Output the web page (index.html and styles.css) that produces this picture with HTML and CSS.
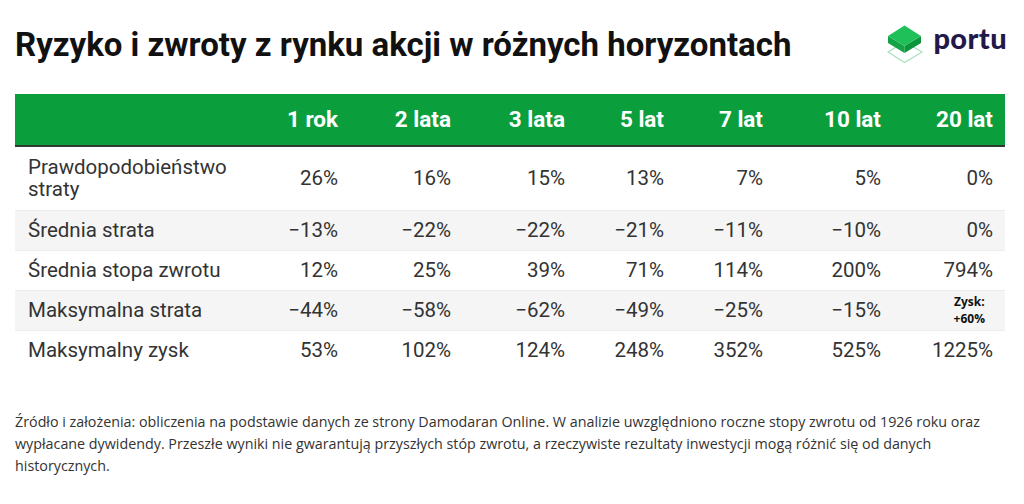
FILE: index.html
```html
<!DOCTYPE html>
<html lang="pl">
<head>
<meta charset="utf-8">
<link rel="stylesheet" href="styles.css">
</head>
<body>
<div class="page">
  <header class="top">
    <h1 class="title">Ryzyko i zwroty z rynku akcji w różnych horyzontach</h1>
    <div class="logo">
      <svg class="cube" width="37" height="40" viewBox="0 0 37 40">
        <path d="M1 28 L17.5 18 L35 28 L17.5 38.5 Z" fill="none" stroke="#a6e0bb" stroke-width="1.2"/>
        <path d="M1 12 L17.5 22 L17.5 29 L1 19 Z" fill="#12a445"/>
        <path d="M17.5 22 L34 12 L34 19 L17.5 29 Z" fill="#0b963c"/>
        <path d="M1 12 L17.5 1.5 L34 12 L17.5 22 Z" fill="#1fc05a"/>
      </svg>
      <span class="brand">portu</span>
    </div>
  </header>

  <table class="grid">
    <colgroup>
      <col class="c-label"><col class="c1"><col class="c2"><col class="c3"><col class="c4"><col class="c5"><col class="c6"><col class="c7">
    </colgroup>
    <thead>
      <tr>
        <th></th><th>1 rok</th><th>2 lata</th><th>3 lata</th><th>5 lat</th><th>7 lat</th><th>10 lat</th><th>20 lat</th>
      </tr>
    </thead>
    <tbody>
      <tr class="tall">
        <td class="label">Prawdopodobieństwo<br>straty</td><td>26%</td><td>16%</td><td>15%</td><td>13%</td><td>7%</td><td>5%</td><td>0%</td>
      </tr>
      <tr class="alt">
        <td class="label">Średnia strata</td><td>−13%</td><td>−22%</td><td>−22%</td><td>−21%</td><td>−11%</td><td>−10%</td><td>0%</td>
      </tr>
      <tr>
        <td class="label">Średnia stopa zwrotu</td><td>12%</td><td>25%</td><td>39%</td><td>71%</td><td>114%</td><td>200%</td><td>794%</td>
      </tr>
      <tr class="alt">
        <td class="label">Maksymalna strata</td><td>−44%</td><td>−58%</td><td>−62%</td><td>−49%</td><td>−25%</td><td>−15%</td><td class="small"><span>Zysk:<br>+60%</span></td>
      </tr>
      <tr>
        <td class="label">Maksymalny zysk</td><td>53%</td><td>102%</td><td>124%</td><td>248%</td><td>352%</td><td>525%</td><td>1225%</td>
      </tr>
    </tbody>
  </table>

  <p class="note">Źródło i założenia: obliczenia na podstawie danych ze strony Damodaran Online. W analizie uwzględniono roczne stopy zwrotu od 1926 roku oraz wypłacane dywidendy. Przeszłe wyniki nie gwarantują przyszłych stóp zwrotu, a rzeczywiste rezultaty inwestycji mogą różnić się od danych historycznych.</p>
</div>
</body>
</html>
```

FILE: styles.css
```css
* { box-sizing: border-box; }
html, body { margin: 0; padding: 0; background: #fff; }
body { font-family: Roboto, "Liberation Sans", sans-serif; color: #333; }
.page { width: 1024px; height: 504px; padding: 0 19px 0 15px; }

.top { display: flex; justify-content: space-between; align-items: flex-start; height: 94px; }
.title { margin: 26px 0 0; font-size: 33px; line-height: 38px; font-weight: 700; color: #111; }
.logo { display: flex; align-items: flex-start; gap: 9px; margin: 24px -2px 0 0; }
.cube { display: block; }
.brand { font-family: Lato, "Open Sans", sans-serif; font-weight: 900; font-size: 29px; line-height: 28px; color: #22194a; margin-top: 0; letter-spacing: 0.4px; }

.grid { width: 990px; border-collapse: collapse; table-layout: fixed; font-size: 20.5px; }
.c-label { width: 250px; }
.c1 { width: 85px; }
.c2 { width: 113px; }
.c3 { width: 114px; }
.c4 { width: 99px; }
.c5 { width: 99px; }
.c6 { width: 118px; }
.c7 { width: 112px; }

thead th { background: #0a9e3d; color: #fff; font-size: 22.5px; font-weight: 700; height: 52px; text-align: right; padding: 0 12px 2px 0; border-bottom: 2px solid #2c3a2f; }
tbody td { height: 40px; text-align: right; padding: 0 12px 0 0; border-bottom: 1px solid #ececec; line-height: 22px; color: #333; }
tbody tr.tall td { height: 64px; }
tbody tr.alt td { background: #f5f5f5; }
tbody tr:last-child td { border-bottom: none; }
td.label { text-align: left; padding-left: 13px; }
td.small span { display: inline-block; font-family: "Open Sans", sans-serif; font-weight: 700; font-size: 12px; line-height: 17px; text-align: center; color: #111; margin-right: 8px; }

.note { margin: 41px 0 0; font-family: "Open Sans", sans-serif; font-size: 14.3px; line-height: 22px; color: #333; }
```
